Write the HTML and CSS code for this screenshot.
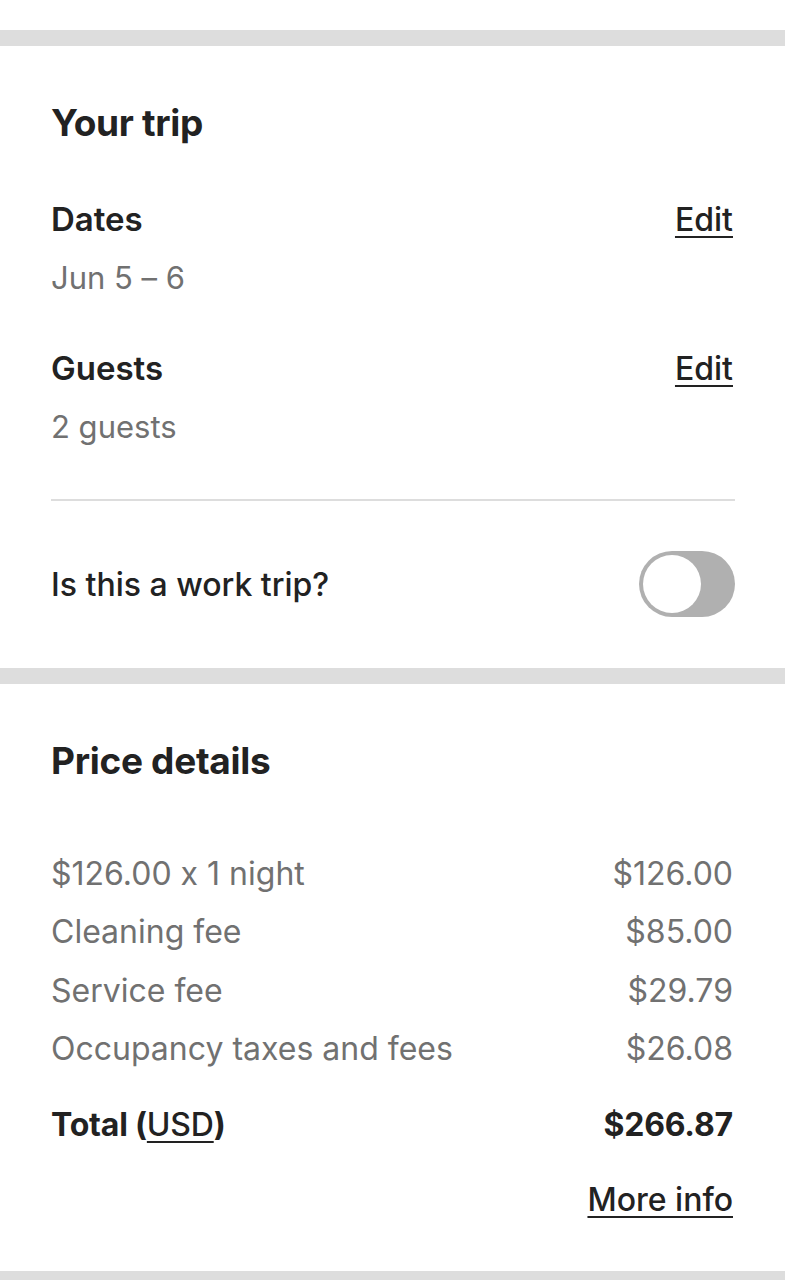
FILE: index.html
```html
<!DOCTYPE html>
<html lang="en">
<head>
<meta charset="utf-8">
<title>Your trip</title>
<link rel="stylesheet" href="styles.css">
</head>
<body>
<div class="top-space"></div>
<div class="band"></div>
<section class="section trip">
  <h2 class="heading">Your trip</h2>
  <div class="item item-dates">
    <div class="item-head">
      <span class="label">Dates</span>
      <a class="link" href="#">Edit</a>
    </div>
    <div class="value">Jun 5 – 6</div>
  </div>
  <div class="item item-guests">
    <div class="item-head">
      <span class="label">Guests</span>
      <a class="link" href="#">Edit</a>
    </div>
    <div class="value">2 guests</div>
  </div>
  <div class="divider"></div>
  <div class="work-row">
    <span class="work-label">Is this a work trip?</span>
    <div class="toggle"><div class="knob"></div></div>
  </div>
</section>
<div class="band"></div>
<section class="section price">
  <h2 class="heading">Price details</h2>
  <div class="rows">
    <div class="row"><span>$126.00 x 1 night</span><span class="amount">$126.00</span></div>
    <div class="row"><span>Cleaning fee</span><span class="amount">$85.00</span></div>
    <div class="row"><span>Service fee</span><span class="amount">$29.79</span></div>
    <div class="row"><span>Occupancy taxes and fees</span><span class="amount">$26.08</span></div>
  </div>
  <div class="total"><span>Total (<a class="plain-link" href="#">USD</a>)</span><span class="amount">$266.87</span></div>
  <div class="more"><a class="link more-link" href="#">More info</a></div>
</section>
<div class="band band-last"></div>
</body>
</html>
```

FILE: styles.css
```css
html, body {
  margin: 0;
  padding: 0;
  background: #ffffff;
}
body {
  font-family: Inter, "Noto Sans", "Liberation Sans", sans-serif;
  font-feature-settings: "calt" 0;
  color: #222222;
  width: 785px;
}
.top-space {
  height: 30px;
}
.band {
  height: 16px;
  background: #dddddd;
}
.band-last {
  height: 20px;
}
.section {
  padding: 0 50px 0 51px;
}
.trip {
  padding-top: 57px;
  padding-bottom: 51px;
}
.heading {
  margin: 0;
  font-size: 37px;
  line-height: 40px;
  font-weight: 700;
  letter-spacing: -0.3px;
}
.item-dates {
  margin-top: 58px;
}
.item-guests {
  margin-top: 54px;
}
.item-head {
  display: flex;
  justify-content: space-between;
  align-items: baseline;
  line-height: 36px;
}
.label {
  font-size: 33px;
  font-weight: 600;
  letter-spacing: 0;
}
.link {
  color: #222222;
  font-size: 32px;
  font-weight: 500;
  margin-right: 2px;
  text-decoration: underline;
  text-decoration-thickness: 2px;
  text-underline-offset: 5px;
}
.value {
  margin-top: 22px;
  font-size: 31px;
  line-height: 36px;
  color: #717171;
  letter-spacing: 0;
}
.divider {
  margin-top: 54px;
  height: 2px;
  background: #dddddd;
}
.work-row {
  margin-top: 50px;
  display: flex;
  justify-content: space-between;
  align-items: center;
}
.work-label {
  font-size: 32px;
  font-weight: 500;
  letter-spacing: 0;
}
.toggle {
  width: 96px;
  height: 66px;
  box-sizing: border-box;
  padding: 4px;
  border-radius: 33px;
  background: #b0b0b0;
  display: flex;
  justify-content: flex-start;
  align-items: center;
}
.knob {
  width: 58px;
  height: 58px;
  border-radius: 50%;
  background: #ffffff;
}
.price {
  padding-top: 57px;
  padding-bottom: 51px;
}
.rows {
  margin-top: 64px;
}
.row {
  display: flex;
  justify-content: space-between;
  font-size: 32px;
  line-height: 58.3px;
  color: #717171;
  letter-spacing: 0;
}
.amount {
  margin-right: 2px;
}
.total {
  margin-top: 27px;
  display: flex;
  justify-content: space-between;
  font-size: 32px;
  line-height: 40px;
  font-weight: 700;
  letter-spacing: -0.2px;
}
.plain-link {
  color: #222222;
  font-weight: 500;
  text-decoration: underline;
  text-decoration-thickness: 2px;
  text-underline-offset: 5px;
}
.more {
  margin-top: 35px;
  display: flex;
  justify-content: flex-end;
  line-height: 40px;
}
.more-link {
  font-size: 32px;
}
```
